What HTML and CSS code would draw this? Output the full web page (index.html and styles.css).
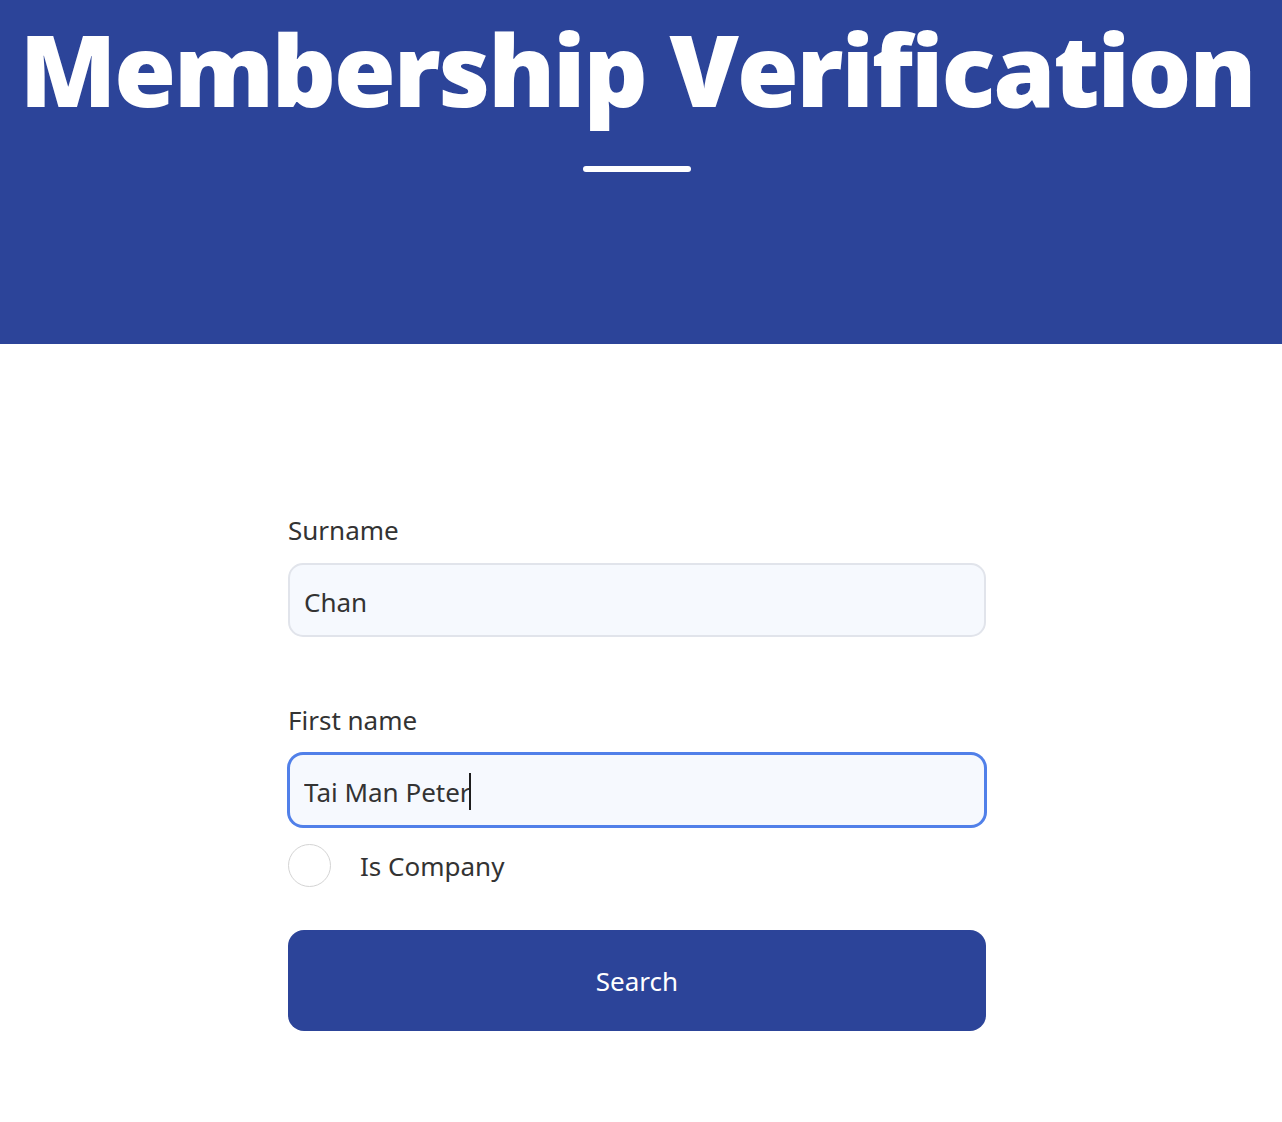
FILE: index.html
```html
<!DOCTYPE html>
<html lang="en">
<head>
  <meta charset="UTF-8">
  <meta name="viewport" content="width=device-width, initial-scale=1.0">
  <title>Membership Verification</title>
  <link rel="stylesheet" href="styles.css">
</head>
<body>
  <div class="hero">
    <h1>Membership Verification</h1>
    <div class="hero-line"></div>
  </div>

  <div class="main">
    <div class="container">
      <form id="verifyForm">
        <label for="surname">Surname</label>
        <input type="text" id="surname" value="Chan">

        <label for="firstName" class="second">First name</label>
        <div class="field">
          <input type="text" id="firstName" class="focused" value="Tai Man Peter">
          <!-- fake text cursor, sits right after the typed value -->
          <span class="caret-layer"><span class="ghost">Tai Man Peter</span><span class="caret"></span></span>
        </div>

        <div class="check-row">
          <span class="radio"></span>
          <span class="check-label">Is Company</span>
        </div>

        <button type="submit">Search</button>
      </form>
    </div>
  </div>
</body>
</html>
```

FILE: styles.css
```css
body {
  font-family: "Noto Sans", "Open Sans", sans-serif;
  color: #333;
  margin: 0;
  padding: 0;
  background: #fff;
}
.hero {
  background-color: #2c4499;
  height: 344px;
  padding: 12px 8px 0 0;
  box-sizing: border-box;
  text-align: center;
}
.hero h1 {
  margin: 0;
  color: #fff;
  font-family: "Open Sans", sans-serif;
  font-weight: 800;
  font-size: 100px;
  line-height: 112px;
  letter-spacing: -2.1px;
}
.hero-line {
  width: 108px;
  height: 6px;
  background: #fff;
  border-radius: 3px;
  margin: 42px auto 0;
}
.main {
  padding-right: 8px;
}
.container {
  width: 698px;
  margin: 0 auto;
  padding-top: 168px;
}
label {
  display: block;
  font-size: 26px;
  line-height: 36px;
  color: #333;
  margin-bottom: 15px;
}
label.second {
  margin-top: 65px;
}
input {
  display: block;
  width: 100%;
  box-sizing: border-box;
  height: 74px;
  padding: 3px 14px 0;
  border: 2px solid #e1e4eb;
  border-radius: 15px;
  background: #f6f9fe;
  font-family: "Noto Sans", sans-serif;
  font-size: 26px;
  color: #333;
  outline: none;
}
input.focused {
  border-color: #5180e9;
  box-shadow: 0 0 0 1px #5180e9;
}
.field {
  position: relative;
}
.caret-layer {
  position: absolute;
  left: 16px;
  top: 3px;
  bottom: 0;
  display: flex;
  align-items: center;
  font-size: 26px;
  pointer-events: none;
}
.ghost {
  color: transparent;
}
.caret {
  width: 2px;
  height: 37px;
  margin-left: -2px;
  background: #1e1e1e;
}
.check-row {
  display: flex;
  align-items: center;
  gap: 29px;
  margin-top: 17px;
}
.radio {
  width: 43px;
  height: 43px;
  border: 1.5px solid #d4d4d4;
  border-radius: 50%;
  box-sizing: border-box;
}
.check-label {
  font-size: 26px;
  line-height: 36px;
  color: #333;
}
button {
  display: block;
  width: 100%;
  height: 101px;
  margin-top: 43px;
  border: none;
  border-radius: 16px;
  background-color: #2c4499;
  color: #fff;
  font-family: "Noto Sans", sans-serif;
  font-size: 26px;
  cursor: pointer;
}
```
